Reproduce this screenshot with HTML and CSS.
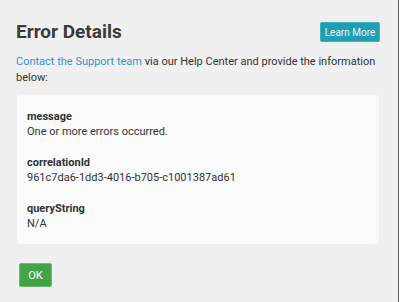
FILE: index.html
```html
<!DOCTYPE html>
<html>
<head>
<meta charset="utf-8">
<link rel="stylesheet" href="styles.css">
</head>
<body>
<div class="dialog">
  <div class="header">
    <h1 class="title">Error Details</h1>
    <button class="btn btn-info">Learn More</button>
  </div>
  <p class="intro"><a class="link" href="#">Contact the Support team</a> via our Help Center and provide the information below:</p>
  <div class="panel">
    <div class="field">
      <div class="label">message</div>
      <div class="value">One or more errors occurred.</div>
    </div>
    <div class="field">
      <div class="label">correlationId</div>
      <div class="value">961c7da6-1dd3-4016-b705-c1001387ad61</div>
    </div>
    <div class="field">
      <div class="label">queryString</div>
      <div class="value">N/A</div>
    </div>
  </div>
  <div class="footer">
    <button class="btn btn-ok">OK</button>
  </div>
</div>
</body>
</html>
```
FILE: styles.css
```css
html, body {
  margin: 0;
  padding: 0;
  background: #f0f0f0;
}
body {
  font-family: Roboto, "Liberation Sans", sans-serif;
  color: #333;
  height: 302px;
  width: 398px;
  border-right: 1px solid #5a5a5a;
  overflow: hidden;
}
.dialog {
  padding: 20px 18px 0 16px;
}
.header {
  display: flex;
  justify-content: space-between;
  align-items: center;
  margin-bottom: 10px;
}
.title {
  margin: 0;
  font-size: 19px;
  line-height: 24px;
  font-weight: 700;
  color: #3a3a3a;
}
.btn {
  font-family: Roboto, "Liberation Sans", sans-serif;
  color: #fff;
  border-radius: 2px;
  padding: 0;
  cursor: pointer;
}
.btn-info {
  width: 60px;
  height: 20px;
  font-size: 10px;
  background: #1f9fb2;
  border: 1px solid #3fb0c1;
  color: #eaf7f9;
}
.intro {
  margin: 0 0 9px 0;
  font-size: 11px;
  line-height: 16px;
  color: #333;
}
.link {
  color: #3b8fd5;
  text-decoration: none;
}
.panel {
  margin: 0 1px;
  background: #fafafa;
  border-radius: 4px;
  padding: 14px 10px 13px 10px;
  display: flex;
  flex-direction: column;
  gap: 16px;
  font-size: 11px;
  line-height: 15px;
}
.label {
  font-weight: 700;
  color: #333;
}
.value {
  color: #333;
}
.footer {
  margin-top: 19px;
  padding-left: 3px;
}
.btn-ok {
  width: 33px;
  height: 24px;
  font-size: 11px;
  background: #43a347;
  border: 1px solid #6cbb6f;
}
```
